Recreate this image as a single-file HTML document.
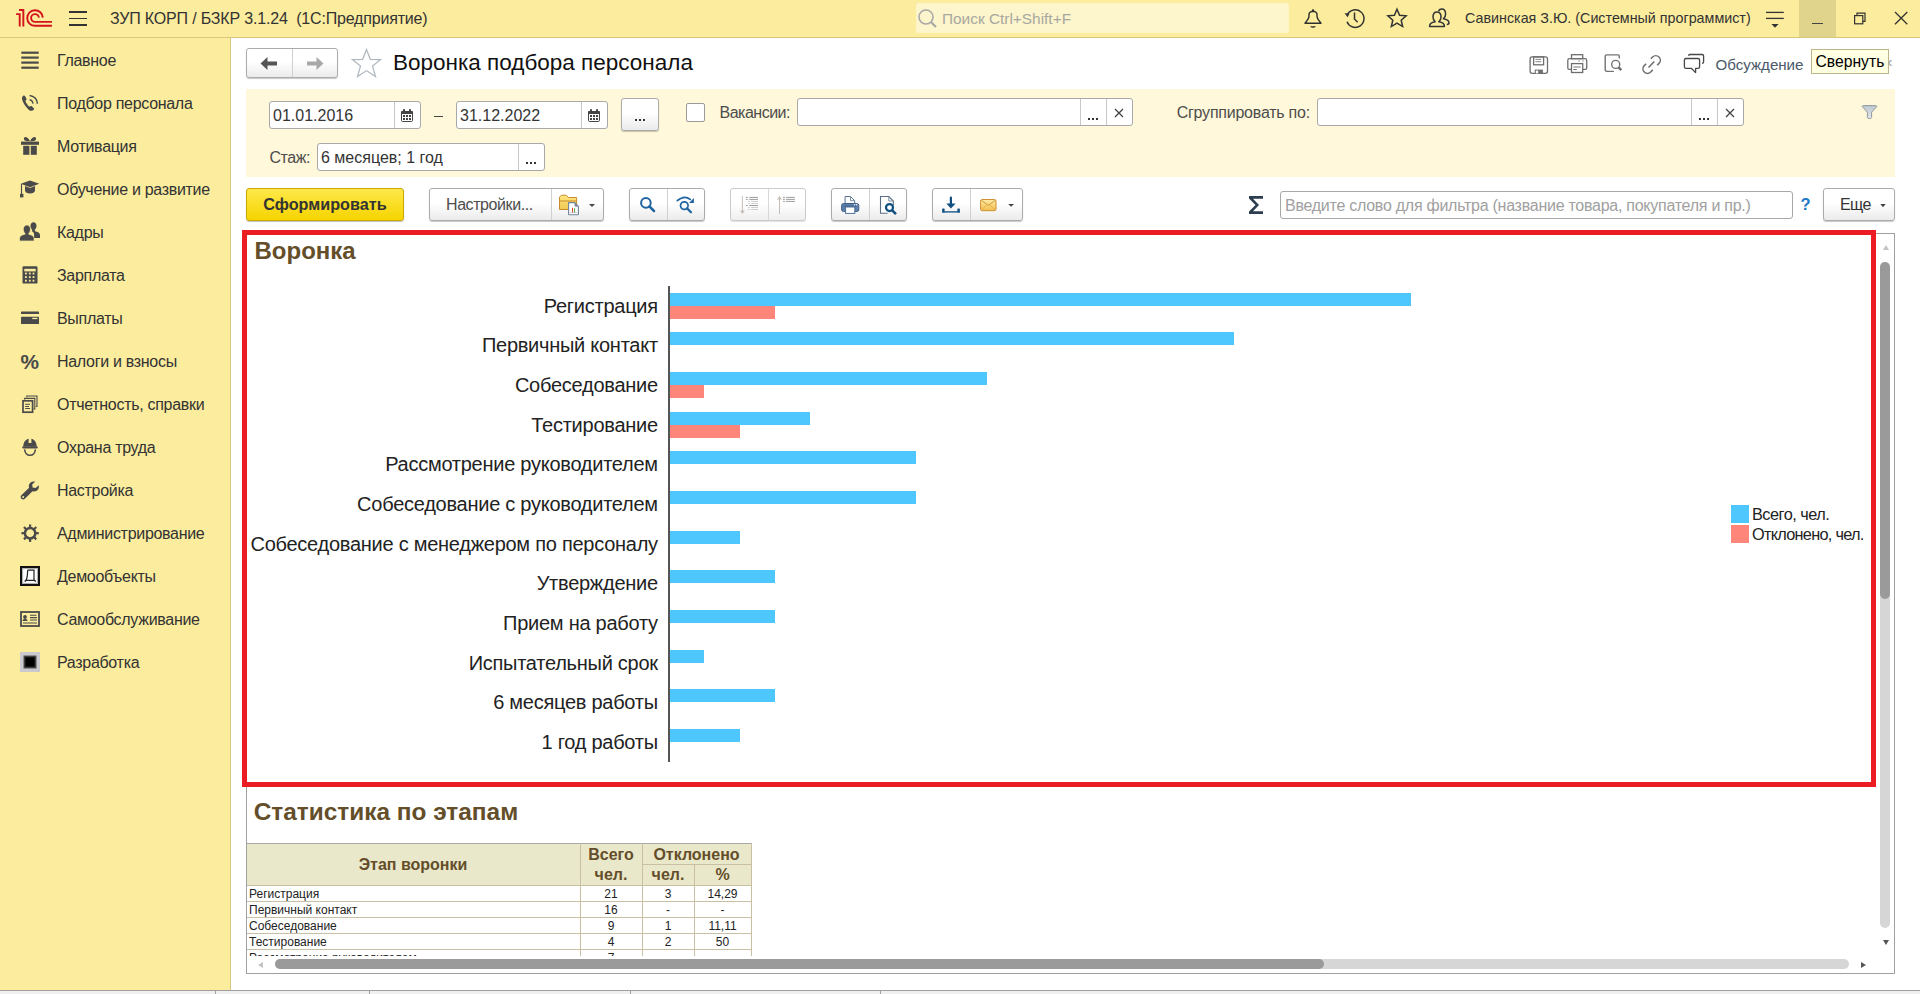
<!DOCTYPE html>
<html><head><meta charset="utf-8"><style>
html,body{margin:0;padding:0;width:1920px;height:994px;overflow:hidden;background:#fff;font-family:"Liberation Sans", sans-serif;}
.t{position:absolute;white-space:pre;}
svg{overflow:visible;}
</style></head><body>
<div style="position:absolute;left:0px;top:0px;width:1920px;height:37px;background:#FBEC9E;"></div>
<div style="position:absolute;left:0px;top:37px;width:1920px;height:1px;background:#D9C77E;"></div>
<svg style="position:absolute;left:0px;top:0px;" width="60" height="37" viewBox="0 0 60 37"><g fill="none" stroke="#D5121C" stroke-width="1.9">
<path d="M16.1 14.1 H19.7 V26.6" /><path d="M19 10 H23.35 V26.6" />
<path d="M42.8 17.6 A7.8 7.8 0 1 0 35 25.8 H51.9" />
<path d="M38.9 17.6 A3.9 3.9 0 1 0 35 21.9 H51.9" />
</g></svg>
<div style="position:absolute;left:69px;top:11.3px;width:18px;height:1.8px;background:#333;"></div>
<div style="position:absolute;left:69px;top:17.5px;width:18px;height:1.8px;background:#333;"></div>
<div style="position:absolute;left:69px;top:23.8px;width:18px;height:1.8px;background:#333;"></div>
<div class="t" style="left:110px;top:11.00px;font-size:16px;line-height:16px;color:#333;font-weight:400;letter-spacing:-0.18px;">ЗУП КОРП / БЗКР 3.1.24&nbsp; (1С:Предприятие)</div>
<div style="position:absolute;left:916px;top:3px;width:373px;height:30px;background:#FDF5CC;border-radius:3px;"></div>
<svg style="position:absolute;left:917px;top:8px;" width="22" height="22" viewBox="0 0 22 22"><circle cx="9" cy="9" r="7" fill="none" stroke="#A8A8A8" stroke-width="1.6"/><path d="M14 14 L19 19" stroke="#A8A8A8" stroke-width="2.2"/></svg>
<div class="t" style="left:942px;top:11.00px;font-size:15.4px;line-height:15.4px;color:#A8A8A0;font-weight:400;">Поиск Ctrl+Shift+F</div>
<svg style="position:absolute;left:1303px;top:8px;" width="20" height="21" viewBox="0 0 20 21"><path d="M10 3.4 Q7 3.6 6.3 5 Q5.9 6.5 5.9 9 Q5.6 10.6 4 12.6 L2 15.2 H18 L16 12.6 Q14.4 10.6 14.1 9 Q14.1 6.5 13.7 5 Q13 3.6 10 3.4 Z" fill="none" stroke="#2E2E2E" stroke-width="1.4" stroke-linejoin="round"/>
<circle cx="10" cy="2.5" r="1.2" fill="#2E2E2E"/><path d="M7 18.2 H13 Q12 19.8 10 19.8 Q8 19.8 7 18.2 Z" fill="#2E2E2E"/></svg>
<svg style="position:absolute;left:1344px;top:8px;" width="22" height="21" viewBox="0 0 22 21"><g fill="none" stroke="#333" stroke-width="1.5">
<path d="M3.4 6.5 A8.8 8.8 0 1 1 3 13.8"/><path d="M10.5 4.5 V11 L13.6 14.2"/></g>
<path d="M0.5 5.2 L5.6 5.4 L3.6 9.2 Z" fill="#333"/></svg>
<svg style="position:absolute;left:1386px;top:8px;" width="22" height="21" viewBox="0 0 22 21"><path d="M11.00 1.20 L13.60 7.23 L20.13 7.83 L15.20 12.16 L16.64 18.57 L11.00 15.22 L5.36 18.57 L6.80 12.16 L1.87 7.83 L8.40 7.23 Z" fill="none" stroke="#333" stroke-width="1.5" stroke-linejoin="miter"/></svg>
<svg style="position:absolute;left:1428px;top:8px;" width="23" height="21" viewBox="0 0 23 21"><g fill="none" stroke="#333" stroke-width="1.5" stroke-linejoin="round">
<path d="M9 4 C6.3 4 5 6.3 5 9 C5 11 6 12.8 7.2 13.8 C4 14.3 1.6 15.6 1.6 18 V18.5 H16.4 V18 C16.4 15.6 14 14.3 10.8 13.8 C12 12.8 13 11 13 9 C13 6.3 11.7 4 9 4 Z"/>
<path d="M10.5 3 C11.2 1.8 12.2 1 13.6 1 C16.3 1 17.6 3.3 17.6 6 C17.6 8 16.6 9.8 15.4 10.8 C18.6 11.3 21 12.6 21 15 C21 16.2 20.2 16.4 18.8 16.4"/></g></svg>
<div class="t" style="left:1465px;top:11.00px;font-size:14.3px;line-height:14.3px;color:#333;font-weight:400;">Савинская З.Ю. (Системный программист)</div>
<svg style="position:absolute;left:1756px;top:0px;" width="40" height="37" viewBox="0 0 40 37"><g stroke="#333" stroke-width="1.3"><path d="M10 12.4 H27.8"/><path d="M10 18.4 H27.8"/></g><path d="M15.4 24 H22.6 L19 27.8 Z" fill="#333"/></svg>
<div style="position:absolute;left:1799px;top:0px;width:37px;height:37px;background:#E0D48C;"></div>
<div style="position:absolute;left:1812px;top:22.5px;width:11px;height:1.3px;background:#444;"></div>
<svg style="position:absolute;left:1850px;top:10px;" width="20" height="18" viewBox="0 0 20 18"><g fill="none" stroke="#333" stroke-width="1.2"><rect x="4.6" y="5.6" width="8.2" height="8.2"/><path d="M7 5.6 V3.2 H15 V11.4 H12.8"/></g></svg>
<svg style="position:absolute;left:1890px;top:8px;" width="22" height="22" viewBox="0 0 22 22"><path d="M5 4 L17.3 16.2 M17.3 4 L5 16.2" stroke="#333" stroke-width="1.3"/></svg>
<div style="position:absolute;left:0px;top:38px;width:230px;height:952px;background:#FBEC9E;"></div>
<div style="position:absolute;left:230px;top:38px;width:1px;height:952px;background:#D9C77E;"></div>
<div class="t" style="left:57px;top:53.00px;font-size:16px;line-height:16px;color:#333;font-weight:400;letter-spacing:-0.3px;">Главное</div>
<!--ICON0-->
<div class="t" style="left:57px;top:96.00px;font-size:16px;line-height:16px;color:#333;font-weight:400;letter-spacing:-0.3px;">Подбор персонала</div>
<!--ICON1-->
<div class="t" style="left:57px;top:139.00px;font-size:16px;line-height:16px;color:#333;font-weight:400;letter-spacing:-0.3px;">Мотивация</div>
<!--ICON2-->
<div class="t" style="left:57px;top:182.00px;font-size:16px;line-height:16px;color:#333;font-weight:400;letter-spacing:-0.3px;">Обучение и развитие</div>
<!--ICON3-->
<div class="t" style="left:57px;top:225.00px;font-size:16px;line-height:16px;color:#333;font-weight:400;letter-spacing:-0.3px;">Кадры</div>
<!--ICON4-->
<div class="t" style="left:57px;top:268.00px;font-size:16px;line-height:16px;color:#333;font-weight:400;letter-spacing:-0.3px;">Зарплата</div>
<!--ICON5-->
<div class="t" style="left:57px;top:311.00px;font-size:16px;line-height:16px;color:#333;font-weight:400;letter-spacing:-0.3px;">Выплаты</div>
<!--ICON6-->
<div class="t" style="left:57px;top:354.00px;font-size:16px;line-height:16px;color:#333;font-weight:400;letter-spacing:-0.3px;">Налоги и взносы</div>
<!--ICON7-->
<div class="t" style="left:57px;top:397.00px;font-size:16px;line-height:16px;color:#333;font-weight:400;letter-spacing:-0.3px;">Отчетность, справки</div>
<!--ICON8-->
<div class="t" style="left:57px;top:440.00px;font-size:16px;line-height:16px;color:#333;font-weight:400;letter-spacing:-0.3px;">Охрана труда</div>
<!--ICON9-->
<div class="t" style="left:57px;top:483.00px;font-size:16px;line-height:16px;color:#333;font-weight:400;letter-spacing:-0.3px;">Настройка</div>
<!--ICON10-->
<div class="t" style="left:57px;top:526.00px;font-size:16px;line-height:16px;color:#333;font-weight:400;letter-spacing:-0.3px;">Администрирование</div>
<!--ICON11-->
<div class="t" style="left:57px;top:569.00px;font-size:16px;line-height:16px;color:#333;font-weight:400;letter-spacing:-0.3px;">Демообъекты</div>
<!--ICON12-->
<div class="t" style="left:57px;top:612.00px;font-size:16px;line-height:16px;color:#333;font-weight:400;letter-spacing:-0.3px;">Самообслуживание</div>
<!--ICON13-->
<div class="t" style="left:57px;top:655.00px;font-size:16px;line-height:16px;color:#333;font-weight:400;letter-spacing:-0.3px;">Разработка</div>
<!--ICON14-->
<div style="position:absolute;left:0px;top:990px;width:1920px;height:1px;background:#A0A0A0;"></div>
<div style="position:absolute;left:0px;top:991px;width:1920px;height:3px;background:#F0F0F0;"></div>
<div style="position:absolute;left:215px;top:991px;width:1px;height:3px;background:#A0A0A0;"></div>
<div style="position:absolute;left:369px;top:991px;width:1px;height:3px;background:#A0A0A0;"></div>
<div style="position:absolute;left:630px;top:991px;width:1px;height:3px;background:#A0A0A0;"></div>
<div style="position:absolute;left:880px;top:991px;width:1px;height:3px;background:#A0A0A0;"></div>
<div style="position:absolute;left:246px;top:48px;width:92px;height:30px;border:1px solid #ABABAB;border-radius:3px;background:linear-gradient(#FFFFFF 0%,#FFFFFF 45%,#EBEBEB 100%);box-shadow:0 1px 1px rgba(0,0,0,0.22);box-sizing:border-box;"></div>
<div style="position:absolute;left:292px;top:49px;width:1px;height:28px;background:#D0D0D0;"></div>
<svg style="position:absolute;left:260px;top:56px;" width="20" height="15" viewBox="0 0 20 15"><path d="M0.5 7.5 L7.5 1 V5.6 H17 V9.4 H7.5 V14 Z" fill="#555"/></svg>
<svg style="position:absolute;left:304px;top:56px;" width="20" height="15" viewBox="0 0 20 15"><path d="M19.5 7.5 L12.5 1 V5.6 H3 V9.4 H12.5 V14 Z" fill="#A8A8A8"/></svg>
<svg style="position:absolute;left:351px;top:48px;" width="32" height="30" viewBox="0 0 32 30"><path d="M15.5 1.5 L19.3 11.3 L29.6 11.6 L21.5 18 L24.5 28.5 L15.5 22.6 L6.5 28.5 L9.5 18 L1.4 11.6 L11.7 11.3 Z" fill="none" stroke="#AEB6BE" stroke-width="1.2"/></svg>
<div class="t" style="left:393px;top:52.00px;font-size:22.5px;line-height:22.5px;color:#111;font-weight:400;">Воронка подбора персонала</div>
<svg style="position:absolute;left:1522px;top:48px;" width="70" height="32" viewBox="0 0 70 32"><g fill="none" stroke="#6E6E6E" stroke-width="1.3"><rect x="8.1" y="8.9" width="17.4" height="16.4" rx="2"/><rect x="11.6" y="8.9" width="10" height="7.9"/>
<rect x="49.5" y="6.7" width="11.2" height="4"/><path d="M49.5 21.4 H47.2 Q45.8 21.4 45.8 20 V12.4 Q45.8 10.7 47.5 10.7 H63 Q64.7 10.7 64.7 12.4 V20 Q64.7 21.4 63.3 21.4 H60.7"/><rect x="49.5" y="15.6" width="11.2" height="8.9"/></g>
<path d="M13.4 11.4 H19.2 M13.4 13.7 H19.2" stroke="#777" stroke-width="0.9"/><rect x="12.7" y="21.6" width="8.2" height="3.7" fill="#6E6E6E"/><rect x="13.8" y="22.6" width="2.4" height="2.7" fill="#fff"/>
<path d="M51.4 19 H58.7" stroke="#8A8A8A" stroke-width="1.2"/><path d="M51.4 21.5 H54.8" stroke="#6E6E6E" stroke-width="1"/><path d="M56.3 13 H58 M60.2 13 H61.9" stroke="#999" stroke-width="1"/></svg>
<svg style="position:absolute;left:1600px;top:50px;" width="26" height="26" viewBox="0 0 26 26"><g fill="none" stroke="#737373" stroke-width="1.4"><path d="M13.9 21.4 H7 Q5.2 21.4 5.2 19.6 V6 Q5.2 4.9 6.5 4.9 H18.2 Q19.3 4.9 19.3 6.2 V8.6"/><circle cx="15.7" cy="14.4" r="4"/></g><path d="M18.6 17.4 L21.3 20.2" stroke="#737373" stroke-width="2.6"/></svg>
<svg style="position:absolute;left:1638px;top:52px;" width="24" height="24" viewBox="0 0 24 24"><g fill="none" stroke="#737373" stroke-width="1.6"><path d="M14.8 17.9 L12.7 20 A4.5 4.5 0 0 1 6.3 13.6 L8.1 11.8"/><path d="M19.2 13.2 L21 11.4 A4.5 4.5 0 0 0 14.6 5 L12.8 6.8"/><path d="M10.5 15.5 L16.3 9.5"/></g></svg>
<svg style="position:absolute;left:1676px;top:48px;" width="32" height="30" viewBox="0 0 32 30"><g fill="none" stroke="#474747" stroke-width="1.3" stroke-linejoin="round"><path d="M19.6 20.3 H22 Q23.6 20.3 23.6 18.7 V12.1 Q23.6 10.5 22 10.5 H10 Q8.4 10.5 8.4 12.1 V18.7 Q8.4 20.3 10 20.3 H15.3 L19.6 24.6 Z"/><path d="M12.4 7.6 Q13 6.5 14.2 6.5 H26 Q27.6 6.5 27.6 8.1 V13.7 Q27.6 15.3 26 15.3"/></g></svg>
<div class="t" style="left:1715.5px;top:57.00px;font-size:15.1px;line-height:15.1px;color:#4A5868;font-weight:400;">Обсуждение</div>
<div class="t" style="left:1884px;top:55.00px;font-size:15px;line-height:15px;color:#999;font-weight:400;">×</div>
<div style="position:absolute;left:1811px;top:49px;width:78px;height:25px;background:#FFFFE1;border:1px solid #BDB58A;box-sizing:border-box;"></div>
<div class="t" style="left:1815.5px;top:54.00px;font-size:15.7px;line-height:15.7px;color:#000;font-weight:400;">Свернуть</div>
<div style="position:absolute;left:246px;top:89px;width:1649px;height:88px;background:#FFF8DA;"></div>
<div style="position:absolute;left:269px;top:101px;width:152px;height:28px;border:1px solid #A8A8A8;border-radius:3px;background:#fff;box-sizing:border-box;"></div>
<div style="position:absolute;left:394px;top:102px;width:1px;height:26px;background:#C8C8C8;"></div>
<div class="t" style="left:273px;top:108.00px;font-size:16px;line-height:16px;color:#333;font-weight:400;">01.01.2016</div>
<svg style="position:absolute;left:401px;top:109px;overflow:hidden;" width="12" height="13" viewBox="0 0 12 13"><rect x="0.5" y="2.5" width="11" height="10" rx="1.2" fill="#fff" stroke="#444" stroke-width="1"/><rect x="0" y="2" width="12" height="3" rx="1" fill="#444"/>
<rect x="2" y="0" width="2" height="3" rx="0.8" fill="#444"/><rect x="8" y="0" width="2" height="3" rx="0.8" fill="#444"/>
<g fill="#444"><rect x="2" y="6" width="2" height="2"/><rect x="5" y="6" width="2" height="2"/><rect x="8" y="6" width="2" height="2"/>
<rect x="2" y="9" width="2" height="2"/><rect x="5" y="9" width="2" height="2"/><rect x="8" y="9" width="2" height="2"/></g></svg>
<div style="position:absolute;left:434px;top:116px;width:9px;height:1.2px;background:#444;"></div>
<div style="position:absolute;left:456px;top:101px;width:152px;height:28px;border:1px solid #A8A8A8;border-radius:3px;background:#fff;box-sizing:border-box;"></div>
<div style="position:absolute;left:581px;top:102px;width:1px;height:26px;background:#C8C8C8;"></div>
<div class="t" style="left:460px;top:108.00px;font-size:16px;line-height:16px;color:#333;font-weight:400;">31.12.2022</div>
<svg style="position:absolute;left:588px;top:109px;overflow:hidden;" width="12" height="13" viewBox="0 0 12 13"><rect x="0.5" y="2.5" width="11" height="10" rx="1.2" fill="#fff" stroke="#444" stroke-width="1"/><rect x="0" y="2" width="12" height="3" rx="1" fill="#444"/>
<rect x="2" y="0" width="2" height="3" rx="0.8" fill="#444"/><rect x="8" y="0" width="2" height="3" rx="0.8" fill="#444"/>
<g fill="#444"><rect x="2" y="6" width="2" height="2"/><rect x="5" y="6" width="2" height="2"/><rect x="8" y="6" width="2" height="2"/>
<rect x="2" y="9" width="2" height="2"/><rect x="5" y="9" width="2" height="2"/><rect x="8" y="9" width="2" height="2"/></g></svg>
<div style="position:absolute;left:621px;top:98px;width:38px;height:33px;border:1px solid #ABABAB;border-radius:3px;background:linear-gradient(#FFFFFF 0%,#FFFFFF 45%,#EBEBEB 100%);box-shadow:0 1px 1px rgba(0,0,0,0.22);box-sizing:border-box;"></div>
<div style="position:absolute;left:635px;top:119px;width:2px;height:2px;background:#333;"></div>
<div style="position:absolute;left:639px;top:119px;width:2px;height:2px;background:#333;"></div>
<div style="position:absolute;left:643px;top:119px;width:2px;height:2px;background:#333;"></div>
<div style="position:absolute;left:686px;top:103px;width:19px;height:19px;border:1px solid #9A9A9A;border-radius:2px;background:#fff;box-sizing:border-box;"></div>
<div class="t" style="left:719.5px;top:105.00px;font-size:16px;line-height:16px;color:#4D4D4D;font-weight:400;letter-spacing:-0.5px;">Вакансии:</div>
<div style="position:absolute;left:797px;top:98px;width:336px;height:28px;border:1px solid #A8A8A8;border-radius:3px;background:#fff;box-sizing:border-box;"></div>
<div style="position:absolute;left:1080px;top:99px;width:1px;height:26px;background:#C8C8C8;"></div>
<div style="position:absolute;left:1106px;top:99px;width:1px;height:26px;background:#C8C8C8;"></div>
<div style="position:absolute;left:1088px;top:118px;width:2px;height:2px;background:#333;"></div>
<div style="position:absolute;left:1092px;top:118px;width:2px;height:2px;background:#333;"></div>
<div style="position:absolute;left:1096px;top:118px;width:2px;height:2px;background:#333;"></div>
<svg style="position:absolute;left:1113px;top:106.5px;" width="12" height="12" viewBox="0 0 12 12"><path d="M2 2 L10 10 M10 2 L2 10" stroke="#444" stroke-width="1.3"/></svg>
<div class="t" style="left:1176.7px;top:105.00px;font-size:16px;line-height:16px;color:#4D4D4D;font-weight:400;letter-spacing:-0.23px;">Сгруппировать по:</div>
<div style="position:absolute;left:1317px;top:98px;width:427px;height:28px;border:1px solid #A8A8A8;border-radius:3px;background:#fff;box-sizing:border-box;"></div>
<div style="position:absolute;left:1691px;top:99px;width:1px;height:26px;background:#C8C8C8;"></div>
<div style="position:absolute;left:1717px;top:99px;width:1px;height:26px;background:#C8C8C8;"></div>
<div style="position:absolute;left:1699px;top:118px;width:2px;height:2px;background:#333;"></div>
<div style="position:absolute;left:1703px;top:118px;width:2px;height:2px;background:#333;"></div>
<div style="position:absolute;left:1707px;top:118px;width:2px;height:2px;background:#333;"></div>
<svg style="position:absolute;left:1724px;top:106.5px;" width="12" height="12" viewBox="0 0 12 12"><path d="M2 2 L10 10 M10 2 L2 10" stroke="#444" stroke-width="1.3"/></svg>
<svg style="position:absolute;left:1861px;top:105px;" width="17" height="15" viewBox="0 0 17 15"><defs><linearGradient id="fu" x1="0" y1="0" x2="0" y2="1"><stop offset="0" stop-color="#BFC7D0"/><stop offset="1" stop-color="#E4E8EC"/></linearGradient></defs><path d="M1.2 1.5 Q1.4 0.6 2.3 0.6 H14.7 Q15.6 0.6 15.8 1.5 L10.6 7.2 V12.5 Q10.6 13.6 8.5 13.6 Q6.4 13.6 6.4 12.5 V7.2 Z" fill="url(#fu)" stroke="#8F9A9F" stroke-width="1"/></svg>
<div class="t" style="left:269.5px;top:150.00px;font-size:16px;line-height:16px;color:#4D4D4D;font-weight:400;letter-spacing:-0.45px;">Стаж:</div>
<div style="position:absolute;left:317px;top:143px;width:228px;height:28px;border:1px solid #A8A8A8;border-radius:3px;background:#fff;box-sizing:border-box;"></div>
<div style="position:absolute;left:518px;top:144px;width:1px;height:26px;background:#C8C8C8;"></div>
<div class="t" style="left:321px;top:150.00px;font-size:16px;line-height:16px;color:#333;font-weight:400;">6 месяцев; 1 год</div>
<div style="position:absolute;left:526px;top:162px;width:2px;height:2px;background:#333;"></div>
<div style="position:absolute;left:530px;top:162px;width:2px;height:2px;background:#333;"></div>
<div style="position:absolute;left:534px;top:162px;width:2px;height:2px;background:#333;"></div>
<div style="position:absolute;left:246px;top:188px;width:158px;height:33px;border:1px solid #C9A800;border-radius:3px;background:linear-gradient(#FFE84A,#F5D400);box-shadow:0 1px 1px rgba(0,0,0,0.25);box-sizing:border-box;"></div>
<div class="t" style="left:263.3px;top:196.00px;font-size:16.2px;line-height:16.2px;color:#333;font-weight:700;">Сформировать</div>
<div style="position:absolute;left:429px;top:188px;width:175px;height:33px;border:1px solid #ABABAB;border-radius:3px;background:linear-gradient(#FFFFFF 0%,#FFFFFF 45%,#EBEBEB 100%);box-shadow:0 1px 1px rgba(0,0,0,0.22);box-sizing:border-box;"></div>
<div style="position:absolute;left:551px;top:189px;width:1px;height:31px;background:#D0D0D0;"></div>
<div class="t" style="left:446px;top:197.00px;font-size:16px;line-height:16px;color:#4D4D4D;font-weight:400;letter-spacing:-0.42px;">Настройки...</div>
<svg style="position:absolute;left:556px;top:192px;" width="26" height="26" viewBox="0 0 26 26"><defs><linearGradient id="fg" x1="0" y1="0" x2="0" y2="1"><stop offset="0" stop-color="#FFE680"/><stop offset="1" stop-color="#F0C850"/></linearGradient></defs>
<path d="M3.5 17.5 V5 L5.6 3.2 H10.2 L12.4 5.5 H20.6 V17.5 Z" fill="url(#fg)" stroke="#C98B2F" stroke-width="1"/><path d="M3.5 9 H20.6" stroke="#C98B2F" stroke-width="1"/>
<path d="M12.6 10.6 H18.6 L22.4 14.4 V22.2 Q22.4 22.8 21.8 22.8 H13.2 Q12.6 22.8 12.6 22.2 Z" fill="#fff" stroke="#6F8598" stroke-width="1.1"/><path d="M18.6 10.6 V14.4 H22.4 Z" fill="#6F8598"/>
<path d="M16.5 15.8 V20.3" stroke="#E23B2C" stroke-width="1"/><path d="M18.6 16.2 V20.3" stroke="#47A84A" stroke-width="1"/><path d="M14.2 20.6 H20.8" stroke="#999" stroke-width="0.6"/></svg>
<svg style="position:absolute;left:589px;top:204px;" width="6" height="3" viewBox="0 0 6 3"><path d="M0 0 H6 L3 3 Z" fill="#444"/></svg>
<div style="position:absolute;left:629px;top:188px;width:76px;height:33px;border:1px solid #ABABAB;border-radius:3px;background:linear-gradient(#FFFFFF 0%,#FFFFFF 45%,#EBEBEB 100%);box-shadow:0 1px 1px rgba(0,0,0,0.22);box-sizing:border-box;"></div>
<div style="position:absolute;left:667px;top:189px;width:1px;height:31px;background:#D0D0D0;"></div>
<svg style="position:absolute;left:636px;top:193px;" width="22" height="22" viewBox="0 0 22 22"><circle cx="9.9" cy="9.9" r="4.8" fill="none" stroke="#1F64A0" stroke-width="2"/><path d="M13.4 13.4 L18 18" stroke="#1F64A0" stroke-width="2.5" stroke-linecap="round"/></svg>
<svg style="position:absolute;left:675px;top:194px;" width="22" height="22" viewBox="0 0 22 22"><circle cx="9.3" cy="11.6" r="3.8" fill="none" stroke="#1F64A0" stroke-width="1.7"/><path d="M12.1 14.4 L16 18.3" stroke="#1F64A0" stroke-width="2.2" stroke-linecap="round"/><path d="M2.3 6.6 Q9.5 0.6 15.2 5.4" fill="none" stroke="#1F64A0" stroke-width="1.7" stroke-linecap="round"/><path d="M14 8.9 H18.9 V4 Z" fill="#1F64A0"/></svg>
<div style="position:absolute;left:730px;top:188px;width:76px;height:33px;border:1px solid #CBCBCB;border-radius:3px;background:linear-gradient(#FFFFFF 0%,#FFFFFF 45%,#EFEFEF 100%);box-shadow:0 1px 1px rgba(0,0,0,0.12);box-sizing:border-box;"></div>
<div style="position:absolute;left:768px;top:189px;width:1px;height:31px;background:#D8D8D8;"></div>
<svg style="position:absolute;left:728px;top:186px;" width="80" height="36" viewBox="0 0 80 36"><path d="M14.4 10 V25.5" stroke="#C6BDB6" stroke-width="1"/><path d="M12 24.5 H16.8 L14.4 28 Z" fill="#C6BDB6"/><rect x="17.899999999999977" y="10.900000000000006" width="1.9" height="1" fill="#9E9E9E"/><rect x="21.25" y="10.900000000000006" width="8.75" height="1" fill="#9E9E9E"/><rect x="17.899999999999977" y="12.900000000000006" width="1.9" height="1" fill="#9E9E9E"/><rect x="21.25" y="12.900000000000006" width="8.75" height="1" fill="#9E9E9E"/><rect x="20" y="14.900000000000006" width="1.9" height="1" fill="#CFCFCF"/><rect x="23.100000000000023" y="14.900000000000006" width="6.9" height="1" fill="#CFCFCF"/><rect x="20" y="16.900000000000006" width="1.9" height="1" fill="#CFCFCF"/><rect x="23.100000000000023" y="16.900000000000006" width="6.9" height="1" fill="#CFCFCF"/><rect x="17.899999999999977" y="19.0" width="1.9" height="1" fill="#9E9E9E"/><rect x="21.25" y="19.0" width="8.75" height="1" fill="#9E9E9E"/><rect x="20" y="21.0" width="1.9" height="1" fill="#CFCFCF"/><rect x="23.100000000000023" y="21.0" width="6.9" height="1" fill="#CFCFCF"/><rect x="20" y="23.0" width="1.9" height="1" fill="#CFCFCF"/><rect x="23.100000000000023" y="23.0" width="6.9" height="1" fill="#CFCFCF"/>
<path d="M51.5 12.5 V28" stroke="#C6BDB6" stroke-width="1"/><path d="M49 13.5 H54 L51.5 10 Z" fill="#C6BDB6"/><rect x="55" y="10.900000000000006" width="1.9" height="1" fill="#9E9E9E"/><rect x="58.10000000000002" y="10.900000000000006" width="8.8" height="1" fill="#9E9E9E"/><rect x="55" y="12.900000000000006" width="1.9" height="1" fill="#9E9E9E"/><rect x="58.10000000000002" y="12.900000000000006" width="8.8" height="1" fill="#9E9E9E"/><rect x="55" y="14.900000000000006" width="1.9" height="1" fill="#9E9E9E"/><rect x="58.10000000000002" y="14.900000000000006" width="8.8" height="1" fill="#9E9E9E"/></svg>
<div style="position:absolute;left:831px;top:188px;width:76px;height:33px;border:1px solid #ABABAB;border-radius:3px;background:linear-gradient(#FFFFFF 0%,#FFFFFF 45%,#EBEBEB 100%);box-shadow:0 1px 1px rgba(0,0,0,0.22);box-sizing:border-box;"></div>
<div style="position:absolute;left:869px;top:189px;width:1px;height:31px;background:#D0D0D0;"></div>
<svg style="position:absolute;left:828px;top:186px;" width="80" height="36" viewBox="0 0 80 36"><path d="M17.1 17.2 V10.5 H22.5 L26.7 14.7 V17.2" fill="#fff" stroke="#5B7290" stroke-width="1"/><path d="M22.5 10.5 V14.7 H26.7" fill="none" stroke="#7C90A8" stroke-width="1"/>
<rect x="13.6" y="17.5" width="17.2" height="8" rx="2" fill="#5D7FA9" stroke="#3F6189" stroke-width="1"/><rect x="16" y="19.6" width="12.4" height="1" fill="#3F6189"/>
<rect x="17.6" y="21" width="9.2" height="6.4" fill="#fff" stroke="#4F6F96" stroke-width="1"/><circle cx="26.6" cy="18.7" r="0.7" fill="#fff"/><circle cx="28.7" cy="18.7" r="0.7" fill="#fff"/>
<path d="M59.6 27.3 H52.5 V10.5 H60.8 L65.3 15 V19.5" fill="#fff" stroke="#5A6E85" stroke-width="1.1"/><path d="M60.8 10.5 V15 H65.3" fill="none" stroke="#7F90A4" stroke-width="1"/>
<circle cx="61.5" cy="21.6" r="3.5" fill="#fff" stroke="#0F4F80" stroke-width="2.2"/><path d="M64.2 24.4 L68 28.1" stroke="#0F4F80" stroke-width="2.6"/></svg>
<div style="position:absolute;left:932px;top:188px;width:91px;height:33px;border:1px solid #ABABAB;border-radius:3px;background:linear-gradient(#FFFFFF 0%,#FFFFFF 45%,#EBEBEB 100%);box-shadow:0 1px 1px rgba(0,0,0,0.22);box-sizing:border-box;"></div>
<div style="position:absolute;left:970px;top:189px;width:1px;height:31px;background:#D0D0D0;"></div>
<svg style="position:absolute;left:928px;top:186px;" width="100" height="36" viewBox="0 0 100 36"><defs><linearGradient id="eg" x1="0" y1="0" x2="0" y2="1"><stop offset="0" stop-color="#FFEBA8"/><stop offset="1" stop-color="#F1BE4E"/></linearGradient></defs>
<path d="M22.9 11.6 V18.6" stroke="#0F4F80" stroke-width="2.2" stroke-linecap="round"/><path d="M18.3 17.6 H27.6 L22.9 22.4 Z" fill="#0F4F80"/>
<rect x="14.2" y="22.6" width="2.4" height="4" rx="0.6" fill="#0F4F80"/><rect x="29.4" y="22.6" width="2.4" height="4" rx="0.6" fill="#0F4F80"/><rect x="14.2" y="25.2" width="17.6" height="1.4" fill="#1A5A8A"/>
<rect x="52.6" y="13.5" width="15.4" height="11.2" rx="1.6" fill="url(#eg)" stroke="#CF9030" stroke-width="1"/><path d="M53.2 14.2 L60.3 19.4 L67.4 14.2" fill="none" stroke="#D49A38" stroke-width="1"/><path d="M53.4 24.2 L58.6 19 M67.2 24.2 L62 19" stroke="#DDA84A" stroke-width="0.8"/>
<path d="M80.2 18 H86 L83.1 20.8 Z" fill="#444"/></svg>
<svg style="position:absolute;left:1249px;top:196px;" width="14" height="18" viewBox="0 0 14 18"><path d="M0 0 H14 V2.7 H4 L10 9 L4 15.3 H14 V18 H0 V15.5 L6.5 9 L0 2.5 Z" fill="#2B3D4F"/></svg>
<div style="position:absolute;left:1280px;top:191px;width:513px;height:28px;border:1px solid #A8A8A8;border-radius:3px;background:#fff;box-sizing:border-box;"></div>
<div class="t" style="left:1285px;top:198.00px;font-size:16px;line-height:16px;color:#A0A0A0;font-weight:400;letter-spacing:-0.26px;">Введите слово для фильтра (название товара, покупателя и пр.)</div>
<div class="t" style="left:1800.5px;top:196.00px;font-size:16.5px;line-height:16.5px;color:#1E78C8;font-weight:700;">?</div>
<div style="position:absolute;left:1823px;top:188px;width:72px;height:33px;border:1px solid #ABABAB;border-radius:3px;background:linear-gradient(#FFFFFF 0%,#FFFFFF 45%,#EBEBEB 100%);box-shadow:0 1px 1px rgba(0,0,0,0.22);box-sizing:border-box;"></div>
<div class="t" style="left:1840px;top:197.00px;font-size:16px;line-height:16px;color:#333;font-weight:400;letter-spacing:-0.6px;">Еще</div>
<svg style="position:absolute;left:1880px;top:204px;" width="6" height="4" viewBox="0 0 6 4"><path d="M0.3 0 H5.7 L3 3.3 Z" fill="#444"/></svg>
<svg style="position:absolute;left:21px;top:51px;" width="18" height="18" viewBox="0 0 18 18"><rect x="0.3" y="0.6" width="17.4" height="2.2" fill="#4A4A4A"/><rect x="0.3" y="5.5" width="17.4" height="2.2" fill="#4A4A4A"/><rect x="0.3" y="10.5" width="17.4" height="2.2" fill="#4A4A4A"/><rect x="0.3" y="15.6" width="17.4" height="2.2" fill="#4A4A4A"/></svg>
<svg style="position:absolute;left:21px;top:94px;" width="18" height="18" viewBox="0 0 18 18"><path d="M2.6 1.6 C1.2 2.5 0.6 4 1.2 5.8 C2.2 9 4.5 12.6 7.2 15.2 C8.5 16.5 10 17.3 11.4 16.6 L12.6 15.9 C13.2 15.5 13.3 14.8 12.8 14.3 L10.8 12.2 C10.3 11.8 9.7 11.8 9.2 12.2 L8.4 12.8 C6.6 11.2 5.1 9 4.3 6.8 L5.1 6.2 C5.6 5.8 5.7 5.1 5.4 4.6 L4 2 C3.7 1.4 3.1 1.3 2.6 1.6 Z" fill="#4A4A4A"/>
<path d="M8.6 5.6 A4.5 4.5 0 0 1 12 9.6" fill="none" stroke="#4A4A4A" stroke-width="1.3"/><path d="M8.6 1.4 A8.5 8.5 0 0 1 16.4 9.8" fill="none" stroke="#4A4A4A" stroke-width="1.5"/></svg>
<svg style="position:absolute;left:21px;top:136px;" width="18" height="19" viewBox="0 0 18 19"><path d="M9 5.2 C7.5 2 5.5 0.8 4.2 1 C2.6 1.2 2.6 3.6 3.8 4.6 C5 5.4 7 5.4 9 5.2 Z" fill="#4A4A4A"/><path d="M9 5.2 C10.5 2 12.5 0.8 13.8 1 C15.4 1.2 15.4 3.6 14.2 4.6 C13 5.4 11 5.4 9 5.2 Z" fill="#4A4A4A"/>
<rect x="0" y="5.6" width="18" height="3.2" fill="#4A4A4A"/><rect x="2.2" y="9.8" width="6.2" height="9" fill="#4A4A4A"/><rect x="9.8" y="9.8" width="6" height="9" fill="#4A4A4A"/></svg>
<svg style="position:absolute;left:20px;top:180px;" width="20" height="18" viewBox="0 0 20 18"><path d="M10 0.5 L19.3 3.8 L10 7.2 L0.8 3.8 Z" fill="#4A4A4A"/><path d="M5 6 V10.5 C5 12.5 7.5 13.4 10 13.4 C12.5 13.4 15 12.5 15 10.5 V6 L10 7.9 Z" fill="#4A4A4A"/>
<path d="M1.5 4 V14" stroke="#4A4A4A" stroke-width="1.1"/><rect x="0" y="13.8" width="3.4" height="3.6" fill="#4A4A4A"/></svg>
<svg style="position:absolute;left:20px;top:222px;" width="20" height="19" viewBox="0 0 20 19"><path d="M13.5 0.3 C11.8 0.3 10.5 1.6 10.5 3.8 C10.5 5.4 11.2 7 12.2 7.8 L11.8 9.2 C12.8 9.6 13.6 10.4 14 11.6 L14.2 16 H20 V13 C20 11.3 18.3 10 16 9.6 L15 9.3 L14.8 7.8 C15.8 7 16.5 5.4 16.5 3.8 C16.5 1.6 15.2 0.3 13.5 0.3 Z" fill="#4A4A4A"/>
<path d="M7 3.5 C5 3.5 3.8 5 3.8 7.3 C3.8 9.2 4.6 10.8 5.6 11.6 L5.4 12.6 L3 13.2 C1 13.8 0 14.8 0 16.4 V18.6 H13.6 V16.4 C13.6 14.8 12.6 13.8 10.6 13.2 L8.4 12.6 L8.2 11.6 C9.2 10.8 10 9.2 10 7.3 C10 5 8.8 3.5 7 3.5 Z" fill="#4A4A4A" stroke="#4A4A4A" stroke-width="0.3"/></svg>
<svg style="position:absolute;left:22px;top:266px;" width="16" height="18" viewBox="0 0 16 18"><rect x="0.5" y="0.2" width="15" height="17.4" rx="1.2" fill="#4A4A4A"/><rect x="2.3" y="2.8" width="11.4" height="2.6" fill="#FBEC9E"/>
<rect x="3" y="6.6" width="1.8" height="1.8" fill="#FBEC9E"/><rect x="3" y="10.2" width="1.8" height="1.8" fill="#FBEC9E"/><rect x="3" y="13.8" width="1.8" height="1.8" fill="#FBEC9E"/><rect x="6.9" y="6.6" width="1.8" height="1.8" fill="#FBEC9E"/><rect x="6.9" y="10.2" width="1.8" height="1.8" fill="#FBEC9E"/><rect x="6.9" y="13.8" width="1.8" height="1.8" fill="#FBEC9E"/><rect x="10.6" y="6.6" width="1.8" height="1.8" fill="#FBEC9E"/><rect x="10.6" y="10.2" width="1.8" height="1.8" fill="#FBEC9E"/><rect x="10.6" y="13.8" width="1.8" height="1.8" fill="#FBEC9E"/></svg>
<svg style="position:absolute;left:21px;top:311px;" width="18" height="14" viewBox="0 0 18 14"><rect x="0" y="0.6" width="18" height="2.4" rx="0.6" fill="#4A4A4A"/><rect x="0" y="5.8" width="18" height="7.2" rx="0.6" fill="#4A4A4A"/><rect x="11.2" y="6.8" width="5.2" height="1.3" fill="#FBEC9E"/></svg>
<svg style="position:absolute;left:20px;top:352px;" width="20" height="18" viewBox="0 0 20 18"><text x="0.5" y="16.8" font-family="Liberation Sans" font-weight="700" font-size="21" fill="#4A4A4A" textLength="18.5" lengthAdjust="spacingAndGlyphs">%</text></svg>
<svg style="position:absolute;left:22px;top:395px;" width="16" height="18" viewBox="0 0 16 18"><path d="M4.8 2.2 V1 H15 V11.5 H13.8" fill="none" stroke="#4A4A4A" stroke-width="1.1"/><path d="M2.6 4.6 V3.4 H12.8 V14 H11.6" fill="none" stroke="#4A4A4A" stroke-width="1.1"/>
<rect x="1" y="5.8" width="9.6" height="11.4" fill="none" stroke="#4A4A4A" stroke-width="1.7"/><path d="M3.2 9.3 H8 M3.2 11.5 H7 M3.2 13.5 H8" stroke="#4A4A4A" stroke-width="1"/></svg>
<svg style="position:absolute;left:22px;top:438px;" width="16" height="18" viewBox="0 0 16 18"><path d="M1.3 8.5 C1.3 4.5 3.5 1.5 6.6 0.8 V5 H9.4 V0.8 C12.5 1.5 14.7 4.5 14.7 8.5 Z" fill="#4A4A4A"/><rect x="0.3" y="8.3" width="15.4" height="2.2" rx="1" fill="#4A4A4A"/>
<path d="M2.6 11.3 C3 15 5.4 17.2 8 17.2 C10.6 17.2 13 15 13.4 11.3" fill="none" stroke="#4A4A4A" stroke-width="1.5"/></svg>
<svg style="position:absolute;left:20px;top:481px;" width="20" height="19" viewBox="0 0 20 19"><path d="M13.2 0.4 C10.6 0.6 8.8 2.6 8.8 5 C8.8 5.6 8.9 6.2 9.1 6.7 L1.4 14.2 C0.4 15.2 0.4 16.7 1.4 17.7 C2.4 18.7 3.9 18.7 4.9 17.7 L12.5 10.2 C13 10.4 13.6 10.5 14.2 10.5 C16.8 10.5 18.9 8.4 18.9 5.8 L18.8 4.2 L15.6 7 L12.6 6.6 L12.2 3.6 L15.2 0.6 Z" fill="#4A4A4A"/><circle cx="3.2" cy="16" r="1" fill="#FBEC9E"/></svg>
<svg style="position:absolute;left:21px;top:524px;" width="18" height="18" viewBox="0 0 18 18"><g transform="translate(9.1 9.2)"><rect x="-1.1" y="-8.7" width="2.2" height="3.5" fill="#4A4A4A" transform="rotate(0)"/><rect x="-1.1" y="-8.7" width="2.2" height="3.5" fill="#4A4A4A" transform="rotate(45)"/><rect x="-1.1" y="-8.7" width="2.2" height="3.5" fill="#4A4A4A" transform="rotate(90)"/><rect x="-1.1" y="-8.7" width="2.2" height="3.5" fill="#4A4A4A" transform="rotate(135)"/><rect x="-1.1" y="-8.7" width="2.2" height="3.5" fill="#4A4A4A" transform="rotate(180)"/><rect x="-1.1" y="-8.7" width="2.2" height="3.5" fill="#4A4A4A" transform="rotate(225)"/><rect x="-1.1" y="-8.7" width="2.2" height="3.5" fill="#4A4A4A" transform="rotate(270)"/><rect x="-1.1" y="-8.7" width="2.2" height="3.5" fill="#4A4A4A" transform="rotate(315)"/><circle r="5.2" fill="none" stroke="#4A4A4A" stroke-width="2.5"/></g></svg>
<svg style="position:absolute;left:20px;top:566px;" width="20" height="20" viewBox="0 0 20 20"><rect x="1" y="1" width="18" height="18" fill="#fff" stroke="#111" stroke-width="2"/><rect x="2.6" y="2.6" width="14.8" height="14.8" fill="none" stroke="#A8A8A8" stroke-width="1"/>
<path d="M7.6 4.2 H14 V14.3 M5.2 14.3 H15.2 M7.6 4.2 C7.6 9 7 12.5 6 14.3" fill="none" stroke="#222" stroke-width="1.2"/><path d="M5.2 14.3 V16 M15.2 14.3 V16" stroke="#222" stroke-width="1.1"/></svg>
<svg style="position:absolute;left:20px;top:611px;" width="20" height="16" viewBox="0 0 20 16"><rect x="1" y="1" width="18" height="14" fill="none" stroke="#4A4A4A" stroke-width="1.8"/>
<circle cx="5" cy="6" r="1.9" fill="#4A4A4A"/><path d="M2.5 10 C2.5 8.5 3.5 8 5 8 C6.5 8 7.5 8.5 7.5 10 Z" fill="#4A4A4A"/><path d="M10 4.3 H16.5 M10 6.6 H17 M10 9 H17 M3 12 H17" stroke="#4A4A4A" stroke-width="1.1"/></svg>
<svg style="position:absolute;left:20px;top:652px;" width="20" height="20" viewBox="0 0 20 20"><rect x="0" y="0" width="20" height="20" fill="#C9C9CE"/><rect x="3.5" y="3.5" width="13" height="13" fill="#555"/><rect x="4.5" y="4.5" width="11" height="11" fill="#262626"/><rect x="5.5" y="5.5" width="9" height="9" fill="#000"/></svg>
<div style="position:absolute;left:246px;top:233px;width:1649px;height:741px;border:1px solid #A0A0A0;box-sizing:border-box;"></div>
<div class="t" style="left:254.5px;top:239.00px;font-size:24px;line-height:24px;color:#644E2A;font-weight:700;">Воронка</div>
<div style="position:absolute;left:668px;top:286px;width:2px;height:476px;background:#555;"></div>
<div style="position:absolute;left:670px;top:293px;width:741.0px;height:13px;background:#4DC7FD;"></div>
<div style="position:absolute;left:670px;top:306px;width:105.0px;height:13px;background:#FD8579;"></div>
<div class="t" style="right:1262.2px;top:296.00px;font-size:20px;line-height:20px;color:#222;font-weight:400;letter-spacing:-0.26px;">Регистрация</div>
<div style="position:absolute;left:670px;top:332px;width:564.33px;height:13px;background:#4DC7FD;"></div>
<div class="t" style="right:1262.2px;top:335.00px;font-size:20px;line-height:20px;color:#222;font-weight:400;letter-spacing:-0.26px;">Первичный контакт</div>
<div style="position:absolute;left:670px;top:372px;width:317.0px;height:13px;background:#4DC7FD;"></div>
<div style="position:absolute;left:670px;top:385px;width:34.33px;height:13px;background:#FD8579;"></div>
<div class="t" style="right:1262.2px;top:375.00px;font-size:20px;line-height:20px;color:#222;font-weight:400;letter-spacing:-0.26px;">Собеседование</div>
<div style="position:absolute;left:670px;top:412px;width:140.33px;height:13px;background:#4DC7FD;"></div>
<div style="position:absolute;left:670px;top:425px;width:69.67px;height:13px;background:#FD8579;"></div>
<div class="t" style="right:1262.2px;top:415.00px;font-size:20px;line-height:20px;color:#222;font-weight:400;letter-spacing:-0.26px;">Тестирование</div>
<div style="position:absolute;left:670px;top:451px;width:246.33px;height:13px;background:#4DC7FD;"></div>
<div class="t" style="right:1262.2px;top:454.00px;font-size:20px;line-height:20px;color:#222;font-weight:400;letter-spacing:-0.26px;">Рассмотрение руководителем</div>
<div style="position:absolute;left:670px;top:491px;width:246.33px;height:13px;background:#4DC7FD;"></div>
<div class="t" style="right:1262.2px;top:494.00px;font-size:20px;line-height:20px;color:#222;font-weight:400;letter-spacing:-0.26px;">Собеседование с руководителем</div>
<div style="position:absolute;left:670px;top:531px;width:69.67px;height:13px;background:#4DC7FD;"></div>
<div class="t" style="right:1262.2px;top:534.00px;font-size:20px;line-height:20px;color:#222;font-weight:400;letter-spacing:-0.26px;">Собеседование с менеджером по персоналу</div>
<div style="position:absolute;left:670px;top:570px;width:105.0px;height:13px;background:#4DC7FD;"></div>
<div class="t" style="right:1262.2px;top:573.00px;font-size:20px;line-height:20px;color:#222;font-weight:400;letter-spacing:-0.26px;">Утверждение</div>
<div style="position:absolute;left:670px;top:610px;width:105.0px;height:13px;background:#4DC7FD;"></div>
<div class="t" style="right:1262.2px;top:613.00px;font-size:20px;line-height:20px;color:#222;font-weight:400;letter-spacing:-0.26px;">Прием на работу</div>
<div style="position:absolute;left:670px;top:650px;width:34.33px;height:13px;background:#4DC7FD;"></div>
<div class="t" style="right:1262.2px;top:653.00px;font-size:20px;line-height:20px;color:#222;font-weight:400;letter-spacing:-0.26px;">Испытательный срок</div>
<div style="position:absolute;left:670px;top:689px;width:105.0px;height:13px;background:#4DC7FD;"></div>
<div class="t" style="right:1262.2px;top:692.00px;font-size:20px;line-height:20px;color:#222;font-weight:400;letter-spacing:-0.26px;">6 месяцев работы</div>
<div style="position:absolute;left:670px;top:729px;width:69.67px;height:13px;background:#4DC7FD;"></div>
<div class="t" style="right:1262.2px;top:732.00px;font-size:20px;line-height:20px;color:#222;font-weight:400;letter-spacing:-0.26px;">1 год работы</div>
<div style="position:absolute;left:1731px;top:505px;width:18px;height:18px;background:#4DC7FD;"></div>
<div style="position:absolute;left:1731px;top:525px;width:18px;height:18px;background:#FD8579;"></div>
<div class="t" style="left:1752px;top:506.00px;font-size:16.3px;line-height:16.3px;color:#222;font-weight:400;letter-spacing:-0.5px;">Всего, чел.</div>
<div class="t" style="left:1752px;top:526.00px;font-size:16.3px;line-height:16.3px;color:#222;font-weight:400;letter-spacing:-0.72px;">Отклонено, чел.</div>
<div style="position:absolute;left:242px;top:230px;width:1634px;height:557px;border:5px solid #EC1C24;box-sizing:border-box;"></div>
<div class="t" style="left:253.7px;top:800.00px;font-size:24.4px;line-height:24.4px;color:#644E2A;font-weight:700;">Статистика по этапам</div>
<div style="position:absolute;left:247px;top:843px;width:505px;height:42px;background:#EAE8CA;"></div>
<div style="position:absolute;left:247px;top:843px;width:505px;height:1px;background:#A8A8A8;"></div>
<div style="position:absolute;left:642px;top:864px;width:110px;height:1px;background:#C9BFA5;"></div>
<div style="position:absolute;left:247px;top:885px;width:505px;height:1px;background:#C9BFA5;"></div>
<div style="position:absolute;left:247px;top:901px;width:505px;height:1px;background:#C9BFA5;"></div>
<div style="position:absolute;left:247px;top:917px;width:505px;height:1px;background:#C9BFA5;"></div>
<div style="position:absolute;left:247px;top:933px;width:505px;height:1px;background:#C9BFA5;"></div>
<div style="position:absolute;left:247px;top:949px;width:505px;height:1px;background:#C9BFA5;"></div>
<div style="position:absolute;left:580px;top:843px;width:1px;height:113px;background:#C9BFA5;"></div>
<div style="position:absolute;left:642px;top:843px;width:1px;height:113px;background:#C9BFA5;"></div>
<div style="position:absolute;left:694px;top:864px;width:1px;height:92px;background:#C9BFA5;"></div>
<div style="position:absolute;left:751px;top:843px;width:1px;height:113px;background:#C9BFA5;"></div>
<div class="t" style="left:263.0px;width:300px;text-align:center;top:857.00px;font-size:16px;line-height:16px;color:#644E2A;font-weight:700;">Этап воронки</div>
<div class="t" style="left:581.0px;width:60px;text-align:center;top:847.00px;font-size:16px;line-height:16px;color:#644E2A;font-weight:700;">Всего</div>
<div class="t" style="left:581.0px;width:60px;text-align:center;top:867.00px;font-size:16px;line-height:16px;color:#644E2A;font-weight:700;">чел.</div>
<div class="t" style="left:641.5px;width:110px;text-align:center;top:847.00px;font-size:16px;line-height:16px;color:#644E2A;font-weight:700;">Отклонено</div>
<div class="t" style="left:642.0px;width:52px;text-align:center;top:867.00px;font-size:16px;line-height:16px;color:#644E2A;font-weight:700;">чел.</div>
<div class="t" style="left:694.5px;width:56px;text-align:center;top:867.00px;font-size:16px;line-height:16px;color:#644E2A;font-weight:700;">%</div>
<div style="position:absolute;left:246px;top:843px;width:520px;height:113px;overflow:hidden;">
<div class="t" style="left:3px;top:44.84px;font-size:12px;line-height:12px;color:#222;">Регистрация</div>
<div class="t" style="left:335px;width:60px;text-align:center;top:44.84px;font-size:12px;line-height:12px;color:#222;">21</div>
<div class="t" style="left:392px;width:60px;text-align:center;top:44.84px;font-size:12px;line-height:12px;color:#222;">3</div>
<div class="t" style="left:446.5px;width:60px;text-align:center;top:44.84px;font-size:12px;line-height:12px;color:#222;">14,29</div>
<div class="t" style="left:3px;top:60.84px;font-size:12px;line-height:12px;color:#222;">Первичный контакт</div>
<div class="t" style="left:335px;width:60px;text-align:center;top:60.84px;font-size:12px;line-height:12px;color:#222;">16</div>
<div class="t" style="left:392px;width:60px;text-align:center;top:60.84px;font-size:12px;line-height:12px;color:#222;">-</div>
<div class="t" style="left:446.5px;width:60px;text-align:center;top:60.84px;font-size:12px;line-height:12px;color:#222;">-</div>
<div class="t" style="left:3px;top:76.84px;font-size:12px;line-height:12px;color:#222;">Собеседование</div>
<div class="t" style="left:335px;width:60px;text-align:center;top:76.84px;font-size:12px;line-height:12px;color:#222;">9</div>
<div class="t" style="left:392px;width:60px;text-align:center;top:76.84px;font-size:12px;line-height:12px;color:#222;">1</div>
<div class="t" style="left:446.5px;width:60px;text-align:center;top:76.84px;font-size:12px;line-height:12px;color:#222;">11,11</div>
<div class="t" style="left:3px;top:92.84px;font-size:12px;line-height:12px;color:#222;">Тестирование</div>
<div class="t" style="left:335px;width:60px;text-align:center;top:92.84px;font-size:12px;line-height:12px;color:#222;">4</div>
<div class="t" style="left:392px;width:60px;text-align:center;top:92.84px;font-size:12px;line-height:12px;color:#222;">2</div>
<div class="t" style="left:446.5px;width:60px;text-align:center;top:92.84px;font-size:12px;line-height:12px;color:#222;">50</div>
<div class="t" style="left:3px;top:108.84px;font-size:12px;line-height:12px;color:#222;">Рассмотрение руководителем</div>
<div class="t" style="left:335px;width:60px;text-align:center;top:108.84px;font-size:12px;line-height:12px;color:#222;">7</div>
<div class="t" style="left:392px;width:60px;text-align:center;top:108.84px;font-size:12px;line-height:12px;color:#222;">-</div>
<div class="t" style="left:446.5px;width:60px;text-align:center;top:108.84px;font-size:12px;line-height:12px;color:#222;">-</div>
</div>
<svg style="position:absolute;left:1882.5px;top:245px;" width="6" height="5" viewBox="0 0 6 5"><path d="M3 0 L6 5 H0 Z" fill="#C4C4C4"/></svg>
<div style="position:absolute;left:1880px;top:262px;width:10px;height:666px;background:#D6D6D6;border-radius:5px;"></div>
<div style="position:absolute;left:1880px;top:262px;width:10px;height:337px;background:#9A9A9A;border-radius:5px;"></div>
<svg style="position:absolute;left:1882.5px;top:939.5px;" width="6" height="5" viewBox="0 0 6 5"><path d="M0 0 H6 L3 5 Z" fill="#555"/></svg>
<svg style="position:absolute;left:258px;top:961.5px;" width="5" height="6" viewBox="0 0 5 6"><path d="M0 3 L5 0 V6 Z" fill="#C4C4C4"/></svg>
<div style="position:absolute;left:275px;top:959px;width:1574px;height:10px;background:#D6D6D6;border-radius:5px;"></div>
<div style="position:absolute;left:275px;top:959px;width:1049px;height:10px;background:#9A9A9A;border-radius:5px;"></div>
<svg style="position:absolute;left:1861px;top:961.5px;" width="5" height="6" viewBox="0 0 5 6"><path d="M5 3 L0 0 V6 Z" fill="#555"/></svg>
</body></html>
